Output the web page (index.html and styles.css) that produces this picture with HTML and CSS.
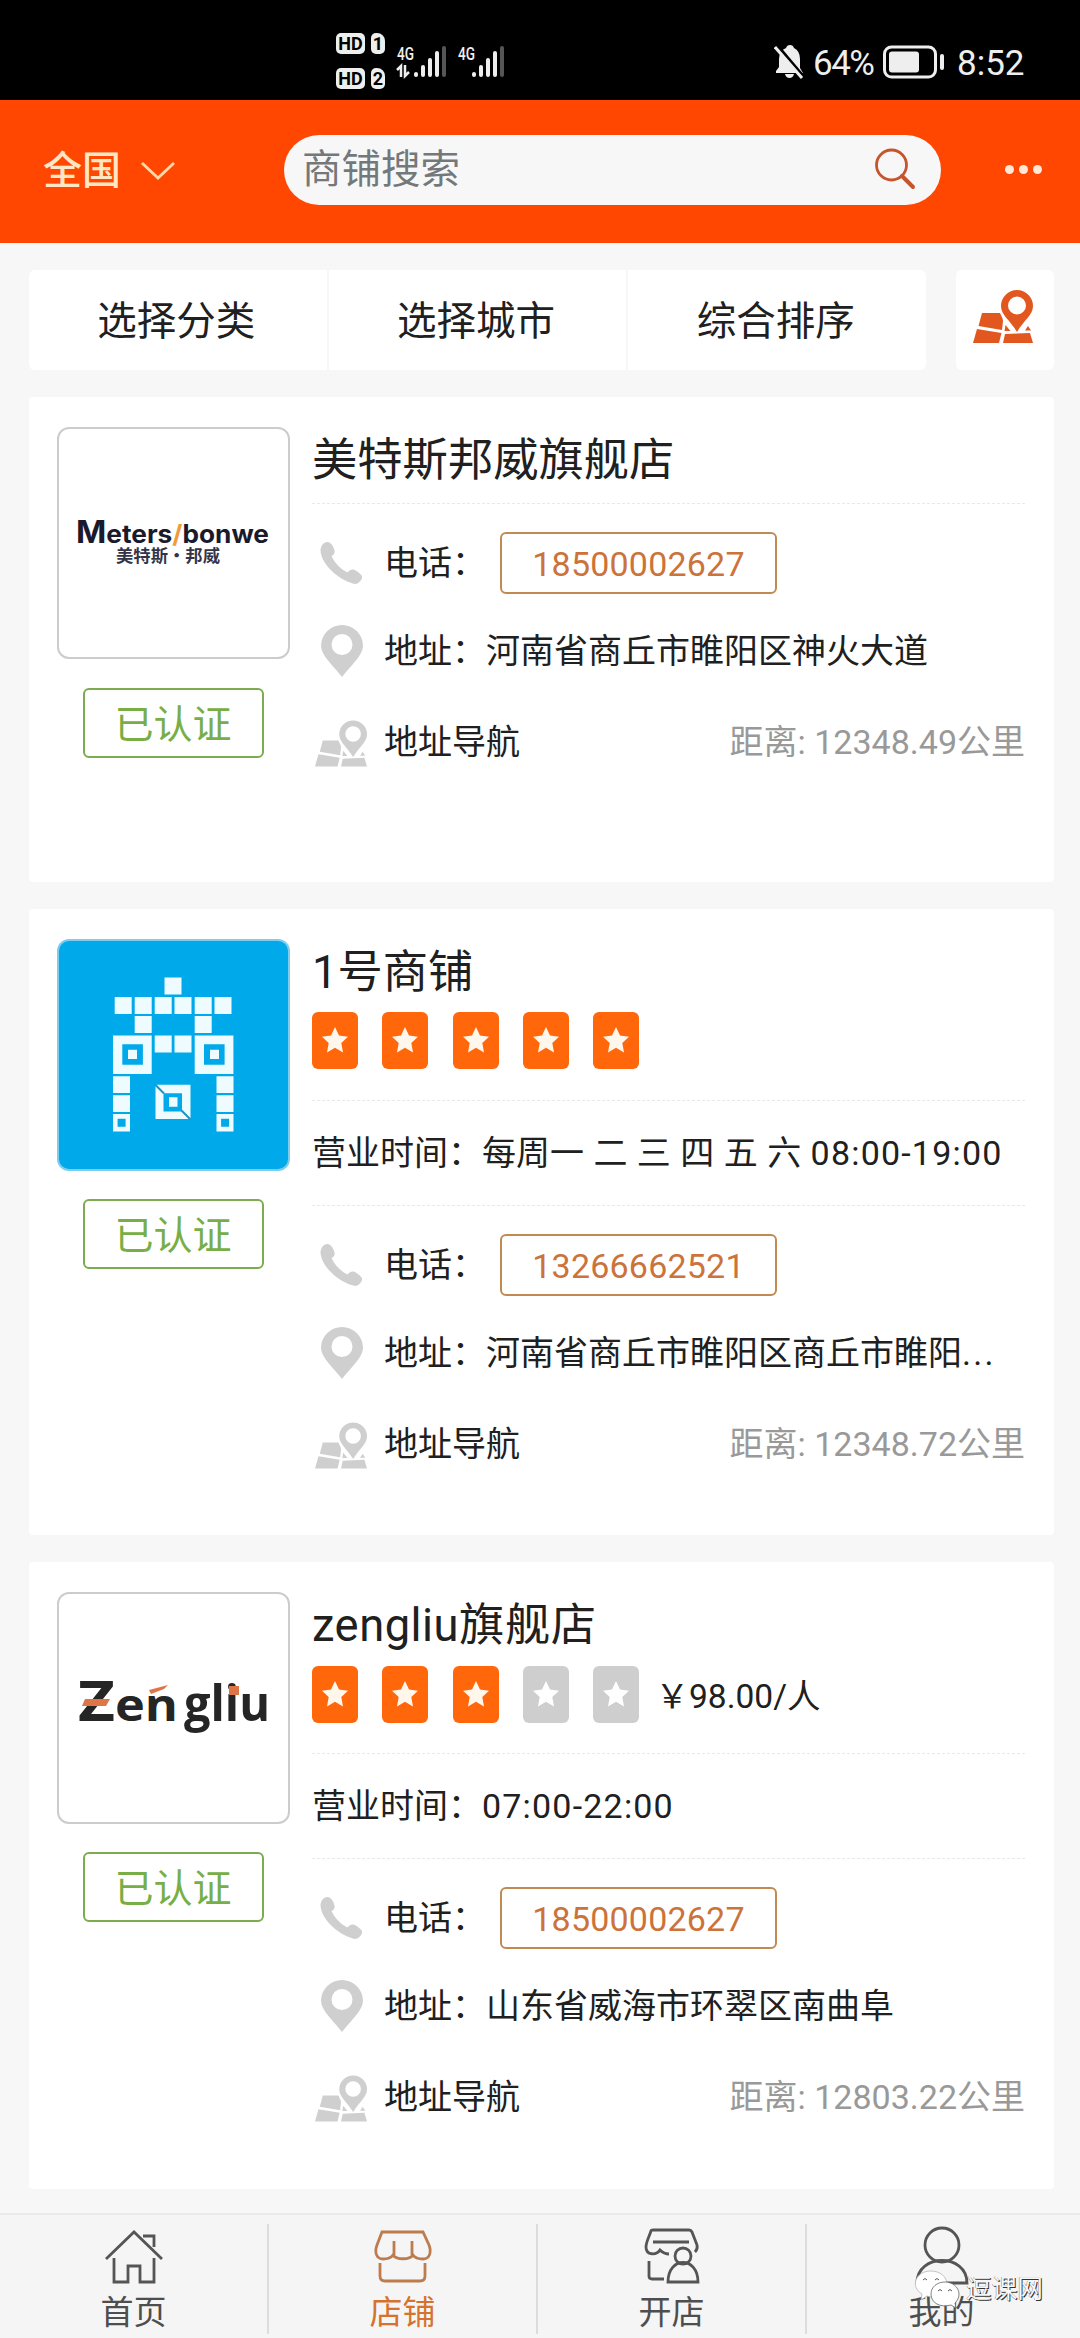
FILE: index.html
```html
<!DOCTYPE html>
<html lang="zh-CN">
<head>
<meta charset="utf-8">
<title>店铺</title>
<link rel="stylesheet" href="styles.css">
</head>
<body>
<svg class="defs" width="0" height="0">
  <symbol id="i-phone" viewBox="0 0 42 42"><path d="M0.500 8C1 3 4 0 7.500 0c3.500 0 6 4.500 7 8.500 .5 2.500-.5 4-3 5.500 3 7 9 13 16 16.500 2-2.500 4-3.500 6-3 3 .8 6 3.500 8.500 6.500 1 2.500-3 7.500-6.500 8C22 40 1 24 .5 8z"/></symbol>
  <symbol id="i-pin" viewBox="0 0 42 52"><path fill-rule="evenodd" d="M21 0a21 21 0 0 1 21 20.500C42 31 29 41 21 52 13 41 0 31 0 20.500A21 21 0 0 1 21 0zm0 9a10.500 10.500 0 1 0 0 21 10.500 10.500 0 0 0 0-21z"/></symbol>
  <symbol id="i-map" viewBox="0 0 60 53"><path fill-rule="evenodd" d="M44 0a16 16 0 0 1 16 16c0 9-9 14-16 26-7-12-16-17-16-26A16 16 0 0 1 44 0zm0 6.500a9 9 0 1 0 0 18 9 9 0 0 0 0-18z"/><path d="M9 23h18c1 3 3 5 3 8l-1 9-23.500-4zM4 39l24.500 4-2.500 10H0zM32 44l25-1 3 10H30zM32.500 35l5 6h-6zM55 36l3 4.500h-6z"/></symbol>
  <symbol id="i-star" viewBox="0 0 28 28"><path d="M14 1l4 8.500 9 1.200-6.700 6.300 1.700 9.500-8-4.700-8 4.700 1.700-9.500L1 10.700l9-1.200z"/></symbol>
</svg>

<header class="status">
  <div class="sims">
    <div class="sim"><b class="hd">HD</b><b class="slot">1</b></div>
    <div class="sim"><b class="hd">HD</b><b class="slot">2</b></div>
  </div>
  <svg class="signals" width="78" height="34" viewBox="0 0 78 34">
    <g class="net"><text x="0" y="15" textLength="17" lengthAdjust="spacingAndGlyphs">4G</text><text x="61" y="15" textLength="17" lengthAdjust="spacingAndGlyphs">4G</text></g>
    <path d="M0 25l4-4v11M8 20v11l4-4" fill="none" stroke="#eee" stroke-width="2.500"/>
    <g fill="#eee"><rect x="17" y="27" width="4" height="5" rx="2"/><rect x="24" y="20" width="4" height="12" rx="2"/><rect x="31" y="13" width="4" height="19" rx="2"/><rect x="38" y="6" width="4" height="26" rx="2"/></g>
    <rect x="45" y="1" width="4" height="31" rx="2" fill="#555"/>
  </svg>
  <svg class="signals2" width="34" height="34" viewBox="0 0 34 34">
    <g fill="#eee"><rect x="1" y="27" width="4" height="5" rx="2"/><rect x="8" y="20" width="4" height="12" rx="2"/><rect x="15" y="13" width="4" height="19" rx="2"/><rect x="22" y="6" width="4" height="26" rx="2"/></g>
    <rect x="29" y="1" width="4" height="31" rx="2" fill="#555"/>
  </svg>
  <div class="status-right">
    <svg width="30" height="34" viewBox="0 0 30 34"><path fill="#eee" d="M12 3q1-3 4-3 3 0 4 3 6 3 6 11v9l3 5H2v-2l3-4v-8q0-8 7-11zM11 29h9q-1 4-4.500 4T11 29z"/><path d="M3 0l27 32" stroke="#000" stroke-width="3"/><path d="M1 2l27 31" stroke="#eee" stroke-width="3"/></svg>
    <span class="pct">64%</span>
    <svg width="62" height="34" viewBox="0 0 62 34"><rect x="1.500" y="2" width="51" height="30" rx="7" fill="none" stroke="#eee" stroke-width="3"/><rect x="6" y="6.500" width="30" height="21" rx="3" fill="#eee"/><rect x="57" y="9" width="4" height="16" rx="2" fill="#eee"/></svg>
    <span class="clock">8:52</span>
  </div>
</header>

<nav class="topbar">
  <div class="region">全国<svg width="34" height="18" viewBox="0 0 34 18"><path d="M1 1l16 15L33 1" fill="none" stroke="#ffd9a8" stroke-width="2.800"/></svg></div>
  <div class="search"><span>商铺搜索</span><svg width="42" height="42" viewBox="0 0 42 42"><circle cx="17.500" cy="17" r="15" fill="none" stroke="#c4552c" stroke-width="2.800"/><path d="M28 28l11 11" stroke="#c4552c" stroke-width="4" stroke-linecap="round"/></svg></div>
  <div class="more"><i></i><i></i><i></i></div>
</nav>

<section class="filters">
  <div class="filter-group"><a>选择分类</a><a>选择城市</a><a>综合排序</a></div>
  <a class="map-btn"><svg width="60" height="53"><use href="#i-map"/></svg></a>
</section>

<main class="list">
  <article class="card card-first">
    <div class="side">
      <div class="logo">
        <svg width="229" height="228" viewBox="0 0 229 228">
          <text class="mb" x="17" y="114" textLength="193" lengthAdjust="spacingAndGlyphs"><tspan class="mb-cap">M</tspan>eters<tspan class="mb-slash">/</tspan>bonwe</text>
          <text class="mb-cn" x="57" y="133" textLength="104" lengthAdjust="spacingAndGlyphs">美特斯·邦威</text>
        </svg>
      </div>
      <div class="badge">已认证</div>
    </div>
    <div class="info">
      <h2>美特斯邦威旗舰店</h2>
      <div class="row phone"><svg width="42" height="42"><use href="#i-phone"/></svg><span>电话：</span><a class="tel">18500002627</a></div>
      <div class="row addr"><svg width="42" height="52"><use href="#i-pin"/></svg><span>地址：河南省商丘市睢阳区神火大道</span></div>
      <div class="row navi"><svg width="52" height="49"><use href="#i-map"/></svg><span>地址导航</span><em>距离: 12348.49公里</em></div>
    </div>
  </article>

  <article class="card card-second">
    <div class="side">
      <div class="logo logo-blue">
        <svg width="229" height="228" viewBox="1 2 229 228">
          <g fill="#effcff">
            <path d="M106.500 38.500h17v17h-17zM56.700 58h17v17h-17zM76.700 58h17v17h-17zM96.700 58h17v17h-17zM116.500 58h17v17h-17zM136.700 58h17v17h-17zM156.500 58h17v17h-17zM76.700 77h17v17h-17zM136.700 77h17v17h-17zM96.700 96.500h17v17h-17zM116.500 96.500h17v17h-17z"/>
            <path fill-rule="evenodd" d="M55 96.500h38.700v38.500H55zm9.300 8.700v20.600h20.600v-20.600zM136.700 96.500h38.700v38.500h-38.700zm9.300 8.700v20.600h20.600v-20.600zM55 175h17v17.500H55zm4.600 4.700v8h8v-8zM158.500 175h17v17.500h-17zm4.600 4.700v8h8v-8zM97.500 145.700h35V180h-35zm8 8.500v18.300H124v-18.300z"/>
            <path d="M70 110.700h9v9.300h-9zM152 110.700h9v9.300h-9zM55 137.300h17V154H55zM55 156.300h17V173H55zM158.500 137.300h17V154h-17zM158.500 156.300h17V173h-17zM111 158.300h8.500v9.400H111z"/>
          </g>
          <path d="M97 145.500l9 9M123.500 171.500l9 9" stroke="#1c93c4" stroke-width="2"/>
        </svg>
      </div>
      <div class="badge">已认证</div>
    </div>
    <div class="info">
      <h2>1号商铺</h2>
      <div class="stars"><i><svg><use href="#i-star"/></svg></i><i><svg><use href="#i-star"/></svg></i><i><svg><use href="#i-star"/></svg></i><i><svg><use href="#i-star"/></svg></i><i><svg><use href="#i-star"/></svg></i></div>
      <div class="row hours">营业时间：每周一 二 三 四 五 六 <span class="time">08:00-19:00</span></div>
      <div class="row phone"><svg width="42" height="42"><use href="#i-phone"/></svg><span>电话：</span><a class="tel">13266662521</a></div>
      <div class="row addr"><svg width="42" height="52"><use href="#i-pin"/></svg><span>地址：河南省商丘市睢阳区商丘市睢阳<span class="ell">...</span></span></div>
      <div class="row navi"><svg width="52" height="49"><use href="#i-map"/></svg><span>地址导航</span><em>距离: 12348.72公里</em></div>
    </div>
  </article>

  <article class="card card-third">
    <div class="side">
      <div class="logo">
        <svg width="229" height="228" viewBox="0 0 229 228">
          <g class="zl"><text x="19" y="127" font-size="55" textLength="37" lengthAdjust="spacingAndGlyphs">Z</text><text x="56" y="127" font-size="44" textLength="63" lengthAdjust="spacingAndGlyphs">en</text><text x="125" y="127" font-size="50" textLength="86" lengthAdjust="spacingAndGlyphs">gliu</text></g>
          <path d="M26 105h25l-4 7H23zM90 96l19-5-4 4-13 5zM170 92h10v9h-10z" fill="#de7547"/>
        </svg>
      </div>
      <div class="badge">已认证</div>
    </div>
    <div class="info">
      <h2 class="latin">zengliu旗舰店</h2>
      <div class="stars"><i><svg><use href="#i-star"/></svg></i><i><svg><use href="#i-star"/></svg></i><i><svg><use href="#i-star"/></svg></i><i class="off"><svg><use href="#i-star"/></svg></i><i class="off"><svg><use href="#i-star"/></svg></i><span>￥98.00/人</span></div>
      <div class="row hours">营业时间：<span class="time">07:00-22:00</span></div>
      <div class="row phone"><svg width="42" height="42"><use href="#i-phone"/></svg><span>电话：</span><a class="tel">18500002627</a></div>
      <div class="row addr"><svg width="42" height="52"><use href="#i-pin"/></svg><span>地址：山东省威海市环翠区南曲阜</span></div>
      <div class="row navi"><svg width="52" height="49"><use href="#i-map"/></svg><span>地址导航</span><em>距离: 12803.22公里</em></div>
    </div>
  </article>
</main>

<footer class="tabs">
  <a class="tab"><svg width="58" height="56" viewBox="0 0 58 56"><path d="M1 30L29 3l28 27M38 7h11v11M9 29v24h14V37h12v16h14V29"/></svg>首页</a>
  <a class="tab active"><svg width="58" height="56" viewBox="0 0 58 56"><path d="M8 3h41l6 13c3 8 0 14-6 14-4 0-8-1-10-4-3 5-17 5-20 0-2 3-6 4-10 4-6 0-9-6-6-14zM20 12v14M38 12v14M6 34v13q0 5 5 5h35q5 0 5-5V34"/></svg>店铺</a>
  <a class="tab"><svg width="58" height="56" viewBox="0 0 58 56"><path d="M26 25c-3 0-7-2-9-4-3 5-14 6-14-3 0-5 3-10 5-16q0-1 2-1h36q2 0 3 2l5 13q1 4-2 7M10 13h36M6 32v15q0 3 3 3h12M25 53c0-26 30-26 30 0z"/><circle cx="40" cy="27" r="8"/></svg>开店</a>
  <a class="tab"><svg width="58" height="56" viewBox="0 0 58 56"><circle cx="29" cy="16" r="17"/><path d="M4 54C4 24 54 24 54 54z"/></svg>我的</a>
  <div class="mark">
    <svg width="52" height="42" viewBox="0 0 52 42"><path d="M17 1c9 0 16 6 16 13S26 27 17 27l-4-1-6 4 1-6C-4 17 1 1 17 1z" fill="#fff" stroke="#aaa" stroke-width=".7"/><path d="M31 12c7 0 14 5 14 12 0 4-2 7-4 9l1 5-5-3C26 38 17 33 17 24c0-7 6-12 14-12z" fill="#fff" stroke="#666" stroke-width=".8"/><path d="M9 10q2-3 4 0M21 10q2-3 4 0M24 21q2-3 4 0M34 21q2-3 4 0" fill="none" stroke="#555"/></svg><span>逗课网</span>
  </div>
</footer>
</body>
</html>
```

FILE: styles.css
```css
* { box-sizing: border-box; }
body {
  margin: 0;
  width: 1080px;
  height: 2338px;
  display: flex;
  flex-direction: column;
  overflow: hidden;
  background: #f7f7f7;
  color: #202020;
  font-family: Roboto, "Noto Sans CJK SC", sans-serif;
  font-size: 34px;
}
svg { display: block; flex: none; }
.defs { position: absolute; }

/* system status bar */
.status {
  flex: none;
  height: 100px;
  padding: 33px 56px 0 336px;
  display: flex;
  align-items: flex-start;
  background: #000;
  color: #eee;
}
.sims { display: flex; flex-direction: column; gap: 14px; margin-right: 12px; }
.sim { display: flex; gap: 6px; }
.hd, .slot {
  height: 21px;
  border-radius: 5px;
  background: #eee;
  color: #000;
  font-size: 18px;
  line-height: 22px;
  text-align: center;
}
.hd { width: 29px; }
.slot { width: 14px; border-top-right-radius: 8px; }
.signals { margin-top: 12px; overflow: visible; }
.signals2 { margin-top: 12px; margin-left: -4px; }
.net { fill: #eee; font-size: 19px; font-weight: 500; }
.status-right { margin-left: auto; margin-top: 12px; display: flex; align-items: center; height: 34px; }
.pct, .clock { font-size: 35px; line-height: 34px; font-weight: 400; white-space: nowrap; }
.pct { width: 64px; margin: 3px 6px 0 9px; letter-spacing: -1.500px; }
.clock { margin: 3px 0 0 12px; width: 67px; }

/* orange search header */
.topbar {
  flex: none;
  height: 143px;
  display: flex;
  align-items: center;
  padding: 0 38px 4px 43px;
  background: #ff4702;
}
.region { width: 241px; display: flex; align-items: center; gap: 20px; color: #ffe6c4; font-size: 39px; font-weight: 500; line-height: 60px; padding-top: 2px; }
.search {
  width: 657px;
  height: 70px;
  border-radius: 36px;
  padding: 0 25px 0 18px;
  display: flex;
  align-items: center;
  justify-content: space-between;
  background: #f7f7f7;
  color: #73797b;
  font-size: 39.500px;
  line-height: 60px;
}
.search svg { margin-top: -2px; }
.more { margin-left: auto; display: flex; gap: 5px; }
.more i { width: 9px; height: 9px; border-radius: 50%; background: #ffe9d6; }

/* filter row */
.filters { flex: none; display: flex; justify-content: space-between; padding: 27px 26px 0 29px; height: 154px; }
.filter-group { display: flex; width: 897px; height: 100px; border-radius: 6px; background: #fff; }
.filter-group a { flex: 1; padding-right: 3px; font-size: 39.500px; line-height: 104px; text-align: center; border-left: 2px solid #f7f7f7; }
.filter-group a:first-child { border-left: 0; }
.map-btn { width: 98px; height: 100px; padding: 20px 0 0 17px; border-radius: 6px; background: #fff; fill: #e2571f; }

/* shop cards */
.list { flex: 1; display: flex; flex-direction: column; gap: 27px; padding: 0 26px 0 29px; }
.card { flex: none; display: flex; gap: 22px; padding: 30px 29px 0 28px; background: #fff; border-radius: 4px; }
.card-first { height: 485px; }
.card-second { height: 626px; }
.card-third { height: 627px; }
.side { width: 233px; display: flex; flex-direction: column; align-items: center; gap: 29px; }
.logo { width: 233px; height: 232px; border: 2px solid #ccc; border-radius: 12px; overflow: hidden; }
.logo-blue { border-color: #7fcdee; background: #00a9e9; }
.badge { width: 181px; height: 70px; margin-right: 1px; border: 2px solid #7cab50; border-radius: 6px; color: #78ae46; font-size: 39px; line-height: 70px; text-align: center; }
.card-second .badge, .card-third .badge { margin-top: -1px; }
.mb { font-family: Inter, sans-serif; font-weight: 700; font-size: 25px; fill: #1b1a2c; }
.mb-cap { font-size: 31px; }
.mb-slash { fill: #f09a3c; }
.mb-cn { font-family: "Noto Sans CJK SC", sans-serif; font-weight: 700; font-size: 17px; fill: #33344a; }
.zl { font-family: "Open Sans", sans-serif; font-weight: 700; fill: #252525; }
.info { flex: 1; }
h2 { margin: 0; padding-top: 1px; height: 64px; font-size: 45.300px; font-weight: 400; line-height: 66px; }
.latin { letter-spacing: .5px; }
.stars { margin-top: 9px; height: 57px; display: flex; align-items: center; }
.card-third .stars { margin: 10px 0 -1px; }
.stars i { width: 46px; height: 57px; margin-right: 24.300px; border-radius: 6px; background: #ff670a; fill: #fff6ec; padding: 14px 9px; }
.stars i.off { background: #cecece; fill: #fff; }
.stars i svg { width: 28px; height: 28px; }
.stars span { margin-left: -8px; font-size: 33.500px; margin-top: -3px; }
.row { display: flex; align-items: center; white-space: pre; line-height: 50px; }
.row svg { fill: #cfcfcf; }
.hours { margin-top: 31px; height: 105px; border-top: 1px dashed #e9e9e9; word-spacing: 1px; }
.time { letter-spacing: 1.200px; }
.phone { height: 120px; border-top: 1px dashed #e9e9e9; padding: 0 0 2px 8px; }
h2 + .phone { margin-top: 12px; }
.row.phone > span { margin-left: 22px; }
.tel { width: 277px; height: 62px; margin-left: 14px; border: 2px solid #c08a52; border-radius: 6px; color: #cb733a; line-height: 60px; text-align: center; letter-spacing: .2px; }
.addr { height: 55px; padding-left: 9px; }
.row.addr > span { margin-left: 21px; }
.ell { letter-spacing: 2.300px; }
.navi { height: 127px; padding-left: 3px; }
.navi svg { margin-top: 4px; }
.row.navi > span { margin-left: 17px; }
.navi em { margin-left: auto; font-style: normal; color: #999; }

/* bottom tabs */
.tabs { position: relative; flex: none; height: 125px; display: flex; border-top: 2px solid #eaeaea; background: #f5f5f5; }
.tab { width: 269px; display: flex; flex-direction: column; align-items: center; padding-top: 14px; font-size: 33px; line-height: 52px; color: #4e4e4e; border: solid; border-width: 0 2px 0 0; border-image: linear-gradient(transparent 10px, #dcdcdc 10px, #dcdcdc 118px, transparent 118px) 1; }
.tab:nth-child(4) { border: 0; }
.tab svg { margin-bottom: 2px; overflow: visible; fill: none; stroke: #555; stroke-width: 2.800; }
.tab.active { color: #d5732e; }
.tab.active svg { stroke: #bd7c4d; }

/* watermark laid over the last tab */
.mark { position: absolute; left: 914px; top: 55px; display: flex; align-items: center; }
.mark svg { fill: none; }
.mark span { font-size: 25.700px; line-height: 30px; margin-top: -5px; color: #f8f8f8; text-shadow: 1px 1px 0 #333, -.5px -.5px 0 #888; }
```
